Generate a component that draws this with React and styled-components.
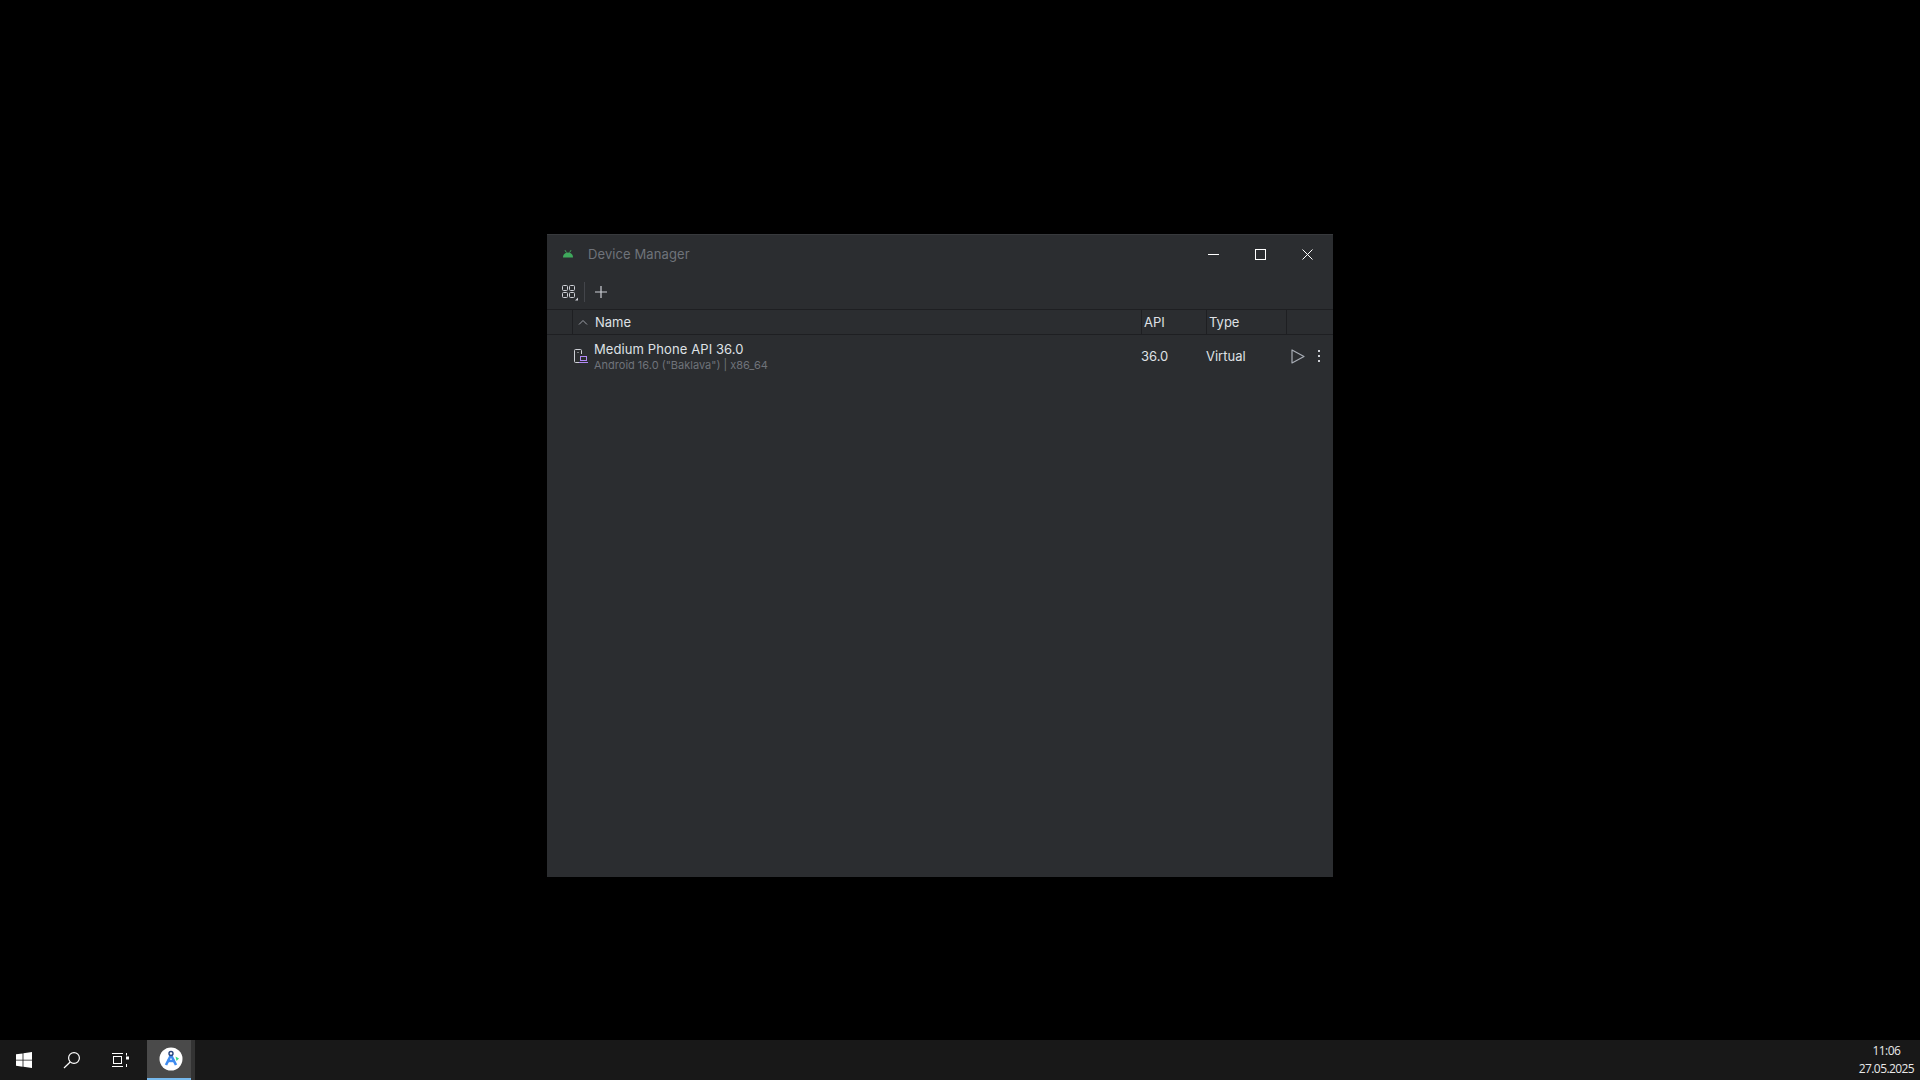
import React from "react";
import styled, { createGlobalStyle } from "styled-components";

const Global = createGlobalStyle`
    html, body { margin:0; padding:0; background:#000; }
    #root { height:100vh; }
`;

const Desktop = styled.div`
    width:1920px;
    height:1080px;
    display:flex;
    flex-direction:column;
    position:relative;
    overflow:hidden;
    background:#000;
`;

const Canvas = styled.div`
    flex:1;
`;

const Window = styled.div`
    position:absolute;
    left:547px;
    top:234px;
    width:786px;
    height:643px;
    background:#2b2d30;
    border-top:1px solid #37393c;
    box-sizing:border-box;
    display:flex;
    flex-direction:column;
    font-family:Inter, "Noto Sans", sans-serif;
    font-size:13px;
    color:#dfe1e5;
`;

const TitleBar = styled.div`
    height:38px;
    display:flex;
    align-items:center;
    padding:0 2px 0 15px;
    flex-shrink:0;
`;

const Title = styled.span`
    margin-left:14px;
    color:#6f737a;
    font-size:13px;
    letter-spacing:.1px;
    flex:1;
`;

const WinButton = styled.div`
    width:47px;
    height:38px;
    display:flex;
    align-items:center;
    justify-content:center;
`;

const Toolbar = styled.div`
    height:37px;
    display:flex;
    align-items:center;
    padding:1px 0 0 14px;
    flex-shrink:0;
    border-bottom:1px solid #1e1f22;
    box-sizing:border-box;
`;

const ToolDivider = styled.div`
    width:1px;
    height:20px;
    background:#43454a;
    margin:0 9px 0 5px;
`;

const HeaderRow = styled.div`
    height:25px;
    display:flex;
    align-items:stretch;
    flex-shrink:0;
    border-bottom:1px solid #1e1f22;
    box-sizing:border-box;
`;

const HeaderCell = styled.div`
    width:${p => p.$w}px;
    flex:${p => p.$grow ? 1 : "none"};
    display:flex;
    align-items:center;
    padding-left:${p => p.$pad || 0}px;
    border-left:${p => p.$line ? "1px solid #1e1f22" : "none"};
    box-sizing:border-box;
    gap:7px;
`;

const DeviceRow = styled.div`
    height:42px;
    display:flex;
    align-items:center;
`;

const DeviceIcon = styled.div`
    width:47px;
    display:flex;
    justify-content:flex-end;
    padding-right:6px;
    box-sizing:border-box;
`;

const DeviceInfo = styled.div`
    width:547px;
    display:flex;
    flex-direction:column;
    line-height:16px;
`;

const DeviceName = styled.span`
    font-size:13px;
    letter-spacing:.1px;
    color:#dfe1e5;
`;

const DeviceMeta = styled.span`
    font-size:11px;
    line-height:14px;
    margin-top:1px;
    color:#6f737a;
`;

const Cell = styled.div`
    width:${p => p.$w}px;
    color:#dfe1e5;
`;

const RowActions = styled.div`
    display:flex;
    align-items:center;
    gap:12px;
    margin-left:1px;
`;

const Taskbar = styled.div`
    height:40px;
    background:#181818;
    display:flex;
    align-items:stretch;
    flex-shrink:0;
`;

const TaskIcon = styled.div`
    width:48px;
    display:flex;
    align-items:center;
    justify-content:center;
`;

const ActiveApp = styled.div`
    width:44px;
    margin-left:3px;
    padding-left:3px;
    background:#4a4a4a;
    border-bottom:2px solid #76b9ed;
    box-sizing:border-box;
    display:flex;
    align-items:center;
    justify-content:center;
    box-shadow:4px 0 0 #333;
`;

const Clock = styled.div`
    margin-left:auto;
    padding-right:6px;
    display:flex;
    flex-direction:column;
    align-items:center;
    justify-content:center;
    color:#e8e8e8;
    font-family:"Open Sans", "Noto Sans", sans-serif;
    font-size:12px;
    letter-spacing:-.6px;
    line-height:18px;
`;

const AndroidIcon = () => (
    <svg width="12" height="10" viewBox="0 0 12 10">
        <path d="M1 8.5c0-3 2-5 5-5s5 2 5 5z" fill="#3fa95c" />
        <path d="M3 1.2l1.4 2.4M9 1.2L7.6 3.6" stroke="#3fa95c" strokeWidth="1" />
    </svg>
);

const GroupIcon = () => (
    <svg width="18" height="18" viewBox="0 0 18 18" fill="none" stroke="#ced0d6" strokeWidth="1">
        <rect x="1.5" y="2.5" width="5" height="5" rx="1" />
        <rect x="8.5" y="2.5" width="5" height="5" rx="1" />
        <rect x="1.5" y="9.5" width="5" height="5" rx="1" />
        <rect x="8.5" y="9.5" width="5" height="5" rx="1" />
        <path d="M17 14.5v3h-3z" fill="#ced0d6" stroke="none" />
    </svg>
);

const PlusIcon = () => (
    <svg width="14" height="14" viewBox="0 0 14 14" stroke="#ced0d6" strokeWidth="1.2">
        <path d="M7 1v12M1 7h12" />
    </svg>
);

const ChevronUp = () => (
    <svg width="10" height="7" viewBox="0 0 10 7" fill="none" stroke="#9da0a8" strokeWidth="1">
        <path d="M1 5.5l4-4 4 4" />
    </svg>
);

const PhoneIcon = () => (
    <svg width="14" height="15" viewBox="0 0 14 15" fill="none">
        <path d="M5 13.5H1.5a1 1 0 0 1-1-1V1.5a1 1 0 0 1 1-1h5a1 1 0 0 1 1 1V5" stroke="#ced0d6" />
        <path d="M3.5 3.5h1" stroke="#ced0d6" />
        <rect x="6.5" y="7.5" width="6" height="4" stroke="#b189f5" />
        <path d="M5 13.5h9" stroke="#b189f5" />
    </svg>
);

const PlayIcon = () => (
    <svg width="14" height="15" viewBox="0 0 14 15" fill="none" stroke="#a8adb5" strokeWidth="1.2">
        <path d="M1 1v13l12-6.5z" strokeLinejoin="round" />
    </svg>
);

const MoreIcon = () => (
    <svg width="4" height="14" viewBox="0 0 4 14" fill="#ced0d6">
        <rect x="1" y="1" width="2" height="2" />
        <rect x="1" y="6" width="2" height="2" />
        <rect x="1" y="11" width="2" height="2" />
    </svg>
);

const WindowsLogo = () => (
    <svg width="16" height="16" viewBox="0 0 16 16" fill="#fff">
        <path d="M0 2.3l6.6-.9v6.3H0zM7.4 1.3L16 0v7.7H7.4zM0 8.4h6.6v6.3L0 13.8zM7.4 8.4H16V16l-8.6-1.2z" />
    </svg>
);

const SearchGlyph = () => (
    <svg width="18" height="18" viewBox="0 0 18 18" fill="none" stroke="#fff" strokeWidth="1.2">
        <circle cx="11" cy="7" r="5.4" />
        <path d="M7.2 11L1 17" />
    </svg>
);

const TaskViewGlyph = () => (
    <svg width="17" height="14" viewBox="0 0 17 14" fill="none" stroke="#fff" strokeWidth="1">
        <path d="M0 .5h11M0 13.5h11" />
        <rect x="1.5" y="3.5" width="8" height="7" />
        <path d="M14.5 0v2.5M14.5 11v3" />
        <rect x="14" y="3.5" width="3" height="3" fill="#fff" stroke="none" />
    </svg>
);

const StudioLogo = () => (
    <svg width="24" height="24" viewBox="0 0 24 24">
        <circle cx="12" cy="12" r="11.5" fill="#fff" />
        <path d="M12 8l-5 10M12 8l5 10" stroke="#3f8cf0" strokeWidth="2.6" fill="none" />
        <path d="M8 14h8" stroke="#3f8cf0" strokeWidth="2.4" />
        <circle cx="12" cy="6.5" r="2" fill="none" stroke="#28457e" strokeWidth="1.4" />
        <path d="M16.5 9.5l3.5 2-2.5 2.5z" fill="#3ddc84" />
    </svg>
);

const App = () => {
    return (
        <Desktop>
            <Global />
            <Canvas />
            <Window>
                <TitleBar>
                    <AndroidIcon />
                    <Title>Device Manager</Title>
                    <WinButton>
                        <svg width="11" height="3" viewBox="0 0 11 3" stroke="#fff"><path d="M0 1.5h11" /></svg>
                    </WinButton>
                    <WinButton>
                        <svg width="11" height="11" viewBox="0 0 11 11" fill="none" stroke="#fff"><rect x=".5" y=".5" width="10" height="10" /></svg>
                    </WinButton>
                    <WinButton>
                        <svg width="11" height="11" viewBox="0 0 11 11" stroke="#fff"><path d="M.5.5l10 10M10.5.5l-10 10" /></svg>
                    </WinButton>
                </TitleBar>
                <Toolbar>
                    <GroupIcon />
                    <ToolDivider />
                    <PlusIcon />
                </Toolbar>
                <HeaderRow>
                    <HeaderCell $w={25} />
                    <HeaderCell $w={569} $line $pad={5}>
                        <ChevronUp />
                        <span>Name</span>
                    </HeaderCell>
                    <HeaderCell $w={65} $line $pad={2}>API</HeaderCell>
                    <HeaderCell $w={80} $line $pad={2}>Type</HeaderCell>
                    <HeaderCell $grow $line />
                </HeaderRow>
                <DeviceRow>
                    <DeviceIcon>
                        <PhoneIcon />
                    </DeviceIcon>
                    <DeviceInfo>
                        <DeviceName>Medium Phone API 36.0</DeviceName>
                        <DeviceMeta>Android 16.0 ("Baklava") | x86_64</DeviceMeta>
                    </DeviceInfo>
                    <Cell $w={65}>36.0</Cell>
                    <Cell $w={84}>Virtual</Cell>
                    <RowActions>
                        <PlayIcon />
                        <MoreIcon />
                    </RowActions>
                </DeviceRow>
            </Window>
            <Taskbar>
                <TaskIcon><WindowsLogo /></TaskIcon>
                <TaskIcon><SearchGlyph /></TaskIcon>
                <TaskIcon><TaskViewGlyph /></TaskIcon>
                <ActiveApp><StudioLogo /></ActiveApp>
                <Clock>
                    <span>11:06</span>
                    <span>27.05.2025</span>
                </Clock>
            </Taskbar>
        </Desktop>
    );
};

export default App;
